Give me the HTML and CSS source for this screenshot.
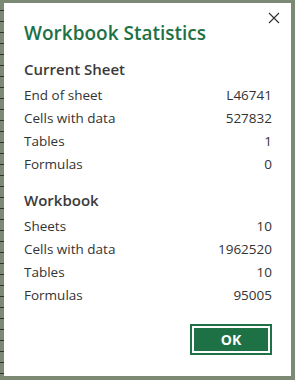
FILE: index.html
```html
<!DOCTYPE html>
<html lang="en">

<head>
    <meta charset="UTF-8">
    <meta name="viewport" content="width=device-width, initial-scale=1.0">
    <title>Workbook Statistics</title>
    <link rel="stylesheet" href="styles.css">
</head>

<body>
    <div class="dialog">
        <div class="header">
            <h1 class="title">Workbook Statistics</h1>
            <div class="close">
                <svg width="12" height="12" viewBox="0 0 12 12">
                    <path d="M1 1 L11 11 M11 1 L1 11" stroke="#333" stroke-width="1.2" fill="none" />
                </svg>
            </div>
        </div>

        <div class="section first">
            <h2 class="section-title">Current Sheet</h2>
            <div class="row"><span>End of sheet</span><span>L46741</span></div>
            <div class="row"><span>Cells with data</span><span>527832</span></div>
            <div class="row"><span>Tables</span><span>1</span></div>
            <div class="row"><span>Formulas</span><span>0</span></div>
        </div>

        <div class="section">
            <h2 class="section-title">Workbook</h2>
            <div class="row"><span>Sheets</span><span>10</span></div>
            <div class="row"><span>Cells with data</span><span>1962520</span></div>
            <div class="row"><span>Tables</span><span>10</span></div>
            <div class="row"><span>Formulas</span><span>95005</span></div>
        </div>

        <div class="footer">
            <button class="ok">OK</button>
        </div>
    </div>
</body>

</html>
```

FILE: styles.css
```css
* {
    padding: 0px;
    margin: 0px;

    box-sizing: border-box;
}

html,
body {
    width: 100%;
    height: 100%;
}

body {
    background-color: #7b8975;
    background-image: repeating-linear-gradient(to bottom, transparent 0px, transparent 10px, #2e332c 10px, #2e332c 11px);
    background-size: 4px 100%;
    background-repeat: no-repeat;
    padding: 3px 4px 4px 4px;

    font-family: "Open Sans", "Noto Sans", sans-serif;
    color: #333;
}

.dialog {
    background-color: white;
    height: 100%;
    display: flex;
    flex-direction: column;

    padding: 0 19px 0 20px;
}

.header {
    display: flex;
    justify-content: space-between;
    align-items: flex-start;
    padding-top: 17px;
}

.title {
    font-size: 19px;
    font-weight: 600;
    color: #1e7145;
    line-height: 26px;
}

.close {
    margin-top: -8px;
    margin-right: -8px;
    display: flex;
}

.section {
    margin-top: 14px;
}

.section.first {
    margin-top: 13px;
}

.section-title {
    font-size: 15px;
    font-weight: 600;
    color: #3a3a3a;
    line-height: 20px;
    margin-bottom: 5px;
}

.row {
    display: flex;
    justify-content: space-between;
    font-size: 13.5px;
    line-height: 23px;
    color: #333;
}

.footer {
    margin-top: auto;
    margin-bottom: 21px;
    display: flex;
    justify-content: flex-end;
}

.ok {
    width: 82px;
    height: 31px;
    background-color: #1e7145;
    border: 2px solid #1e7145;
    outline: 2px solid white;
    outline-offset: -4px;
    color: white;
    font-family: "Open Sans", sans-serif;
    font-weight: 700;
    font-size: 14px;
}
```
